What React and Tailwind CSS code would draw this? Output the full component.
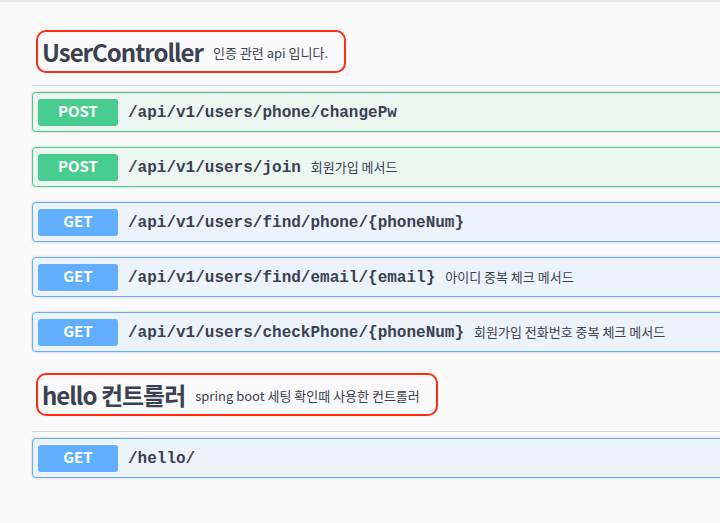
import React from 'react'

const sans = { fontFamily: '"Noto Sans CJK KR", "Noto Sans", sans-serif' }

const styles = {
  POST: {
    block: 'border-[#49cc90] bg-[#ebf7f0]',
    badge: 'bg-[#49cc90]',
  },
  GET: {
    block: 'border-[#61affe] bg-[#ecf3fb]',
    badge: 'bg-[#61affe]',
  },
}

function Op({ method, path, desc }) {
  const s = styles[method]
  return (
    <div
      className={`mb-[15px] flex h-10 items-center rounded border px-[5px] shadow-[0_0_3px_rgba(0,0,0,0.19)] ${s.block}`}
    >
      <span
        className={`flex h-[27px] w-20 shrink-0 items-center justify-center rounded-[3px] pb-[2px] text-[15px] font-semibold text-white ${s.badge}`}
        style={sans}
      >
        {method}
      </span>
      <span className="ml-[10px] pt-[2px] font-['Liberation_Mono',monospace] text-base font-bold text-[#3b4151]">
        {path}
      </span>
      {desc && (
        <span className="ml-[10px] text-[13px] text-[#3b4151]" style={sans}>
          {desc}
        </span>
      )}
    </div>
  )
}

function Tag({ name, desc, gap, children }) {
  return (
    <div>
      <div className="flex">
        <div className="ml-1 flex h-[43px] items-center rounded-[10px] border-2 border-[#ff2b14] pl-1 pr-4">
          <span className="text-2xl font-semibold tracking-[-1px] text-[#3b4151]" style={sans}>
            {name}
          </span>
          <span className="ml-[10px] pt-[2px] text-[13px] text-[#3b4151]" style={sans}>
            {desc}
          </span>
        </div>
      </div>
      <div className={`${gap} mb-[6px] h-px bg-[#d5d6d9]`} />
      {children}
    </div>
  )
}

export default function App() {
  return (
    <div className="h-[523px] w-[720px] overflow-hidden border-t-2 border-[#e8e8e8] bg-[#fafafa]">
      <div className="w-[780px] pl-8 pt-[28px]">
        <Tag name="UserController" desc="인증 관련 api 입니다." gap="mt-3">
          <Op method="POST" path="/api/v1/users/phone/changePw" />
          <Op method="POST" path="/api/v1/users/join" desc="회원가입 메서드" />
          <Op method="GET" path="/api/v1/users/find/phone/{phoneNum}" />
          <Op method="GET" path="/api/v1/users/find/email/{email}" desc="아이디 중복 체크 메서드" />
          <Op
            method="GET"
            path="/api/v1/users/checkPhone/{phoneNum}"
            desc="회원가입 전화번호 중복 체크 메서드"
          />
        </Tag>
        <div className="h-[6px]" />
        <Tag name="hello 컨트롤러" desc="spring boot 세팅 확인때 사용한 컨트롤러" gap="mt-[15px]">
          <Op method="GET" path="/hello/" />
        </Tag>
      </div>
    </div>
  )
}
